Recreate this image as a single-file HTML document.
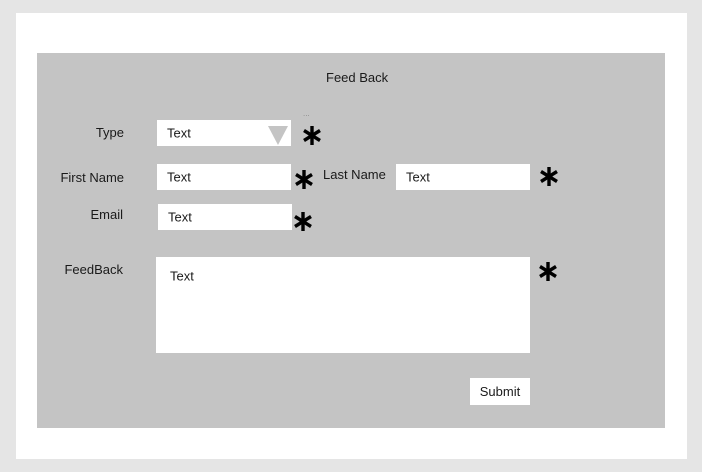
<!DOCTYPE html>
<html><head><style>
body{margin:0;width:702px;height:472px;background:#e5e5e5;font-family:"Liberation Sans",sans-serif;font-size:13px;color:#1a1a1a;position:relative;overflow:hidden}
.a{position:absolute}
.l{position:absolute;width:100px;text-align:right}
.box{position:absolute;background:#fff}
.box span{position:absolute;left:10px;top:50%;transform:translateY(-50%)}
svg.s{position:absolute;width:18px;height:19px}
</style></head><body>
<div class="a" style="left:16px;top:13px;width:671px;height:446px;background:#fff"></div>
<div class="a" style="left:37px;top:53px;width:628px;height:375px;background:#c4c4c4"></div>
<div class="a" style="left:326px;top:70px">Feed Back</div>
<div class="a" style="left:303px;top:109px;font-size:8px;color:#888">...</div>
<div class="l" style="left:24px;top:125px">Type</div>
<div class="l" style="left:24px;top:170px">First Name</div>
<div class="l" style="left:23px;top:207px">Email</div>
<div class="l" style="left:23px;top:262px">FeedBack</div>
<div class="a" style="left:323px;top:167px">Last Name</div>
<div class="box" style="left:157px;top:120px;width:134px;height:26px"><span>Text</span>
<svg class="a" style="left:111px;top:6px" width="20" height="19"><polygon points="0,0 20,0 10,19" fill="#c4c4c4"/></svg></div>
<div class="box" style="left:157px;top:164px;width:134px;height:26px"><span>Text</span></div>
<div class="box" style="left:396px;top:164px;width:134px;height:26px"><span>Text</span></div>
<div class="box" style="left:158px;top:204px;width:134px;height:26px"><span>Text</span></div>
<div class="box" style="left:156px;top:257px;width:374px;height:96px"><span style="top:19px;left:14px">Text</span></div>
<div class="box" style="left:470px;top:378px;width:60px;height:27px;text-align:center;line-height:27px">Submit</div>
<svg class="s" style="left:303px;top:126px" viewBox="0 0 18 19"><g stroke="#000" stroke-width="3.4"><line x1="9" y1="0" x2="9" y2="19"/><line x1="1" y1="4.5" x2="17" y2="14.5"/><line x1="1" y1="14.5" x2="17" y2="4.5"/></g></svg>
<svg class="s" style="left:295px;top:170px" viewBox="0 0 18 19"><g stroke="#000" stroke-width="3.4"><line x1="9" y1="0" x2="9" y2="19"/><line x1="1" y1="4.5" x2="17" y2="14.5"/><line x1="1" y1="14.5" x2="17" y2="4.5"/></g></svg>
<svg class="s" style="left:294px;top:212px" viewBox="0 0 18 19"><g stroke="#000" stroke-width="3.4"><line x1="9" y1="0" x2="9" y2="19"/><line x1="1" y1="4.5" x2="17" y2="14.5"/><line x1="1" y1="14.5" x2="17" y2="4.5"/></g></svg>
<svg class="s" style="left:540px;top:167px" viewBox="0 0 18 19"><g stroke="#000" stroke-width="3.4"><line x1="9" y1="0" x2="9" y2="19"/><line x1="1" y1="4.5" x2="17" y2="14.5"/><line x1="1" y1="14.5" x2="17" y2="4.5"/></g></svg>
<svg class="s" style="left:539px;top:262px" viewBox="0 0 18 19"><g stroke="#000" stroke-width="3.4"><line x1="9" y1="0" x2="9" y2="19"/><line x1="1" y1="4.5" x2="17" y2="14.5"/><line x1="1" y1="14.5" x2="17" y2="4.5"/></g></svg>
</body></html>
